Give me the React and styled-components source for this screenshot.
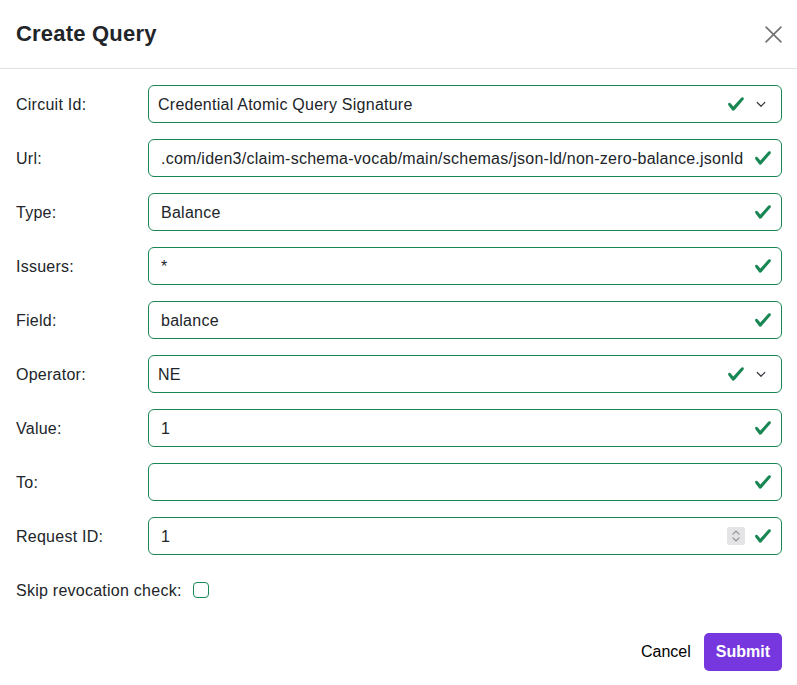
import React from "react";
import styled, { createGlobalStyle } from "styled-components";

const Global = createGlobalStyle`
  html, body { margin: 0; padding: 0; background: #fff; }
  body {
    font-family: "Liberation Sans", Helvetica, Arial, sans-serif;
    font-size: 16px;
    line-height: 1.5;
    color: #212529;
  }
  * { box-sizing: border-box; }
`;

const Modal = styled.div`
  width: 797px;
  height: 685px;
  background: #fff;
  display: flex;
  flex-direction: column;
  overflow: hidden;
`;

const Header = styled.div`
  height: 69px;
  display: flex;
  align-items: center;
  justify-content: space-between;
  padding: 1px 14px 0 16px;
  border-bottom: 1px solid #dee2e6;
`;

const Title = styled.h5`
  margin: 0;
  font-size: 22px;
  font-weight: 700;
  line-height: 1.2;
  letter-spacing: 0.2px;
  color: #212529;
`;

const CloseButton = styled.button`
  width: 20px;
  height: 20px;
  padding: 0;
  border: 0;
  background: transparent;
  display: flex;
  align-items: center;
  justify-content: center;
  cursor: pointer;
`;

const Body = styled.div`
  padding: 16px 15px 0 16px;
  display: flex;
  flex-direction: column;
  gap: 16px;
`;

const Row = styled.div`
  display: grid;
  grid-template-columns: 132px 1fr;
  align-items: center;
  height: 38px;
`;

const Label = styled.label`
  font-size: 16px;
  letter-spacing: 0.25px;
  padding-top: 1px;
  color: #212529;
`;

const Field = styled.div`
  height: 38px;
  display: flex;
  align-items: center;
  border: 1px solid #198754;
  border-radius: 6px;
  padding: 0 ${(p) => (p.$select ? "12px" : "9px")} 0 ${(p) => (p.$select ? "9px" : "12px")};
  gap: ${(p) => (p.$select ? "8px" : "9px")};
  background: #fff;
`;

const FieldInput = styled.input`
  flex: 1;
  min-width: 0;
  border: 0;
  outline: none;
  padding: 1px 0 0;
  background: transparent;
  font: inherit;
  font-size: 16px;
  letter-spacing: 0.25px;
  color: #212529;
`;

const SelectText = styled.div`
  flex: 1;
  min-width: 0;
  padding-top: 1px;
  white-space: nowrap;
  overflow: hidden;
  letter-spacing: 0.25px;
  color: #212529;
`;

const Spinner = styled.span`
  width: 18px;
  height: 18px;
  background: #e4e4e7;
  border-radius: 2px;
  display: flex;
  align-items: center;
  justify-content: center;
`;

const CheckRow = styled.div`
  display: flex;
  align-items: center;
  gap: 11px;
  height: 38px;
`;

const Checkbox = styled.span`
  width: 16px;
  height: 16px;
  border: 1px solid #198754;
  border-radius: 4px;
  background: #fff;
`;

const Footer = styled.div`
  display: flex;
  justify-content: flex-end;
  align-items: center;
  gap: 1px;
  padding: 24px 15px 0 16px;
`;

const LinkButton = styled.button`
  border: 0;
  background: transparent;
  font: inherit;
  font-size: 16px;
  color: #000;
  padding: 6px 12px;
  height: 38px;
  cursor: pointer;
`;

const PrimaryButton = styled.button`
  border: 0;
  background: #7637df;
  color: #fff;
  font: inherit;
  font-size: 16px;
  font-weight: 700;
  border-radius: 5px;
  height: 38px;
  padding: 0 12px;
  cursor: pointer;
`;

const CheckIcon = () => (
  <svg width="18" height="18" viewBox="0 0 8 8" aria-hidden="true">
    <path
      fill="#198754"
      d="M2.3 6.73.6 4.53c-.4-1.04.46-1.4 1.1-.8l1.1 1.4 3.4-3.8c.6-.63 1.6-.27 1.2.7l-4 4.6c-.43.5-.8.4-1.1.1z"
    />
  </svg>
);

const Chevron = () => (
  <svg width="16" height="12" viewBox="0 0 16 16" aria-hidden="true" preserveAspectRatio="xMidYMid meet">
    <path d="m3 6 5 5 5-5" fill="none" stroke="#343a40" strokeWidth="1.6" strokeLinecap="round" strokeLinejoin="round" />
  </svg>
);

const SpinIcon = () => (
  <svg width="10" height="14" viewBox="0 0 10 14" aria-hidden="true">
    <path d="M2 5.2 5 2.2l3 3M2 8.8l3 3 3-3" fill="none" stroke="#8a8a8e" strokeWidth="1.1" strokeLinecap="round" strokeLinejoin="round" />
  </svg>
);

const CloseIcon = () => (
  <svg width="17" height="17" viewBox="0 0 16 16" aria-hidden="true">
    <path d="M1 1l14 14M15 1 1 15" stroke="#707070" strokeWidth="1.5" strokeLinecap="round" />
  </svg>
);

const SelectField = ({ label, value }) => (
  <Row>
    <Label>{label}</Label>
    <Field $select>
      <SelectText>{value}</SelectText>
      <CheckIcon />
      <Chevron />
    </Field>
  </Row>
);

const TextField = ({ label, value, number }) => (
  <Row>
    <Label>{label}</Label>
    <Field>
      <FieldInput readOnly value={value} />
      {number && (
        <Spinner>
          <SpinIcon />
        </Spinner>
      )}
      <CheckIcon />
    </Field>
  </Row>
);

export default function App() {
  return (
    <>
      <Global />
      <Modal>
        <Header>
          <Title>Create Query</Title>
          <CloseButton aria-label="Close">
            <CloseIcon />
          </CloseButton>
        </Header>
        <Body>
          <SelectField label="Circuit Id:" value="Credential Atomic Query Signature" />
          <TextField
            label="Url:"
            value=".com/iden3/claim-schema-vocab/main/schemas/json-ld/non-zero-balance.jsonld"
          />
          <TextField label="Type:" value="Balance" />
          <TextField label="Issuers:" value="*" />
          <TextField label="Field:" value="balance" />
          <SelectField label="Operator:" value="NE" />
          <TextField label="Value:" value="1" />
          <TextField label="To:" value="" />
          <TextField label="Request ID:" value="1" number />
          <CheckRow>
            <Label>Skip revocation check:</Label>
            <Checkbox />
          </CheckRow>
        </Body>
        <Footer>
          <LinkButton>Cancel</LinkButton>
          <PrimaryButton>Submit</PrimaryButton>
        </Footer>
      </Modal>
    </>
  );
}
